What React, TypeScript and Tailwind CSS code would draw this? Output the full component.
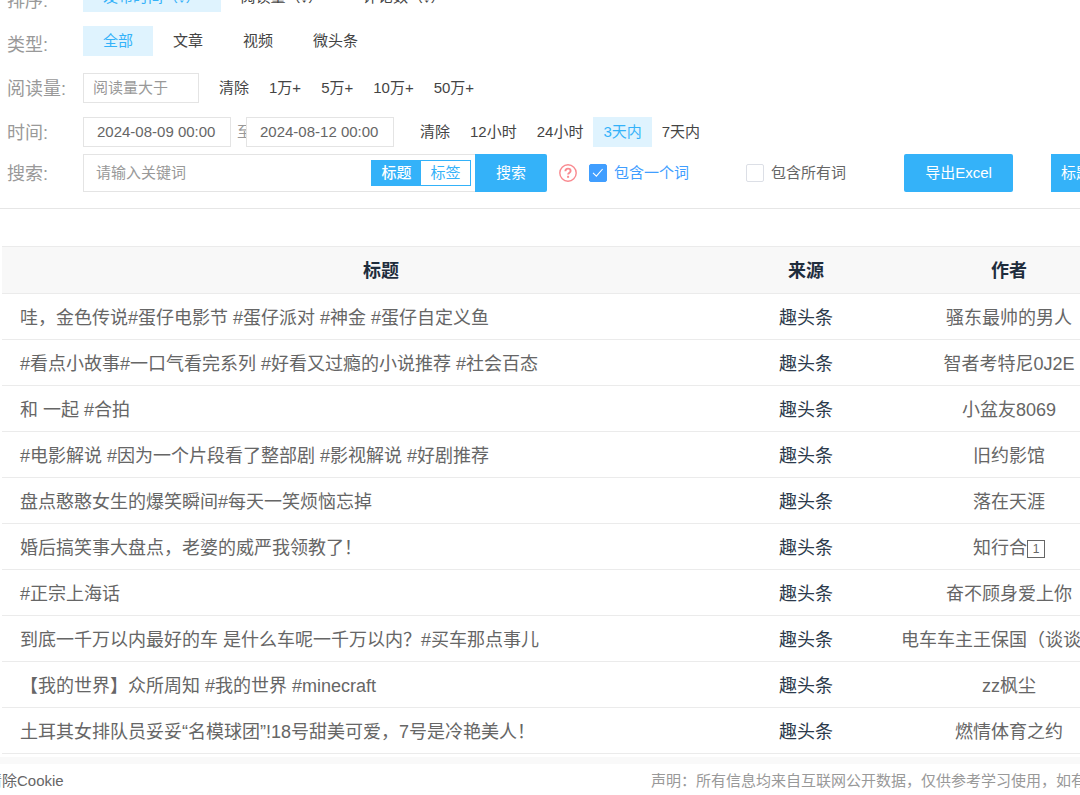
import { useState } from 'react'
import type { ReactNode } from 'react'
import clsx from 'clsx'

const SORTS = ['发布时间（↓）', '阅读量（↓）', '评论数（↓）']
const TYPES = ['全部', '文章', '视频', '微头条']
const READS = ['清除', '1万+', '5万+', '10万+', '50万+']
const TIMES = ['清除', '12小时', '24小时', '3天内', '7天内']

const ROWS: { title: string; author: ReactNode }[] = [
  { title: '哇，金色传说#蛋仔电影节 #蛋仔派对 #神金 #蛋仔自定义鱼', author: '骚东最帅的男人' },
  { title: '#看点小故事#一口气看完系列 #好看又过瘾的小说推荐 #社会百态', author: '智者考特尼0J2E' },
  { title: '和 一起 #合拍', author: '小盆友8069' },
  { title: '#电影解说 #因为一个片段看了整部剧 #影视解说 #好剧推荐', author: '旧约影馆' },
  { title: '盘点憨憨女生的爆笑瞬间#每天一笑烦恼忘掉', author: '落在天涯' },
  { title: '婚后搞笑事大盘点，老婆的威严我领教了！', author: <>知行合<Keycap>1</Keycap></> },
  { title: '#正宗上海话', author: '奋不顾身爱上你' },
  { title: '到底一千万以内最好的车 是什么车呢一千万以内？#买车那点事儿', author: '电车车主王保国（谈谈电）' },
  { title: '【我的世界】众所周知 #我的世界 #minecraft', author: 'zz枫尘' },
  { title: '土耳其女排队员妥妥“名模球团”!18号甜美可爱，7号是冷艳美人！', author: '燃情体育之约' },
]

function Keycap({ children }: { children: ReactNode }) {
  return (
    <span className="inline-flex h-[18px] w-[18px] items-center justify-center border border-[#666] align-middle text-xs leading-none font-medium">
      {children}
    </span>
  )
}

interface FilterRowProps {
  label: string
  className?: string
  labelClassName?: string
  children: ReactNode
}

function FilterRow({ label, className, labelClassName = 'pt-0.5', children }: FilterRowProps) {
  return (
    <div className={clsx('flex items-center', className)}>
      <div className={clsx('w-[76px] shrink-0 text-lg leading-6 text-[#999]', labelClassName)}>{label}</div>
      {children}
    </div>
  )
}

interface OptionsProps {
  items: string[]
  value?: string
  wide?: boolean
  onChange: (v: string) => void
}

function Options({ items, value, wide, onChange }: OptionsProps) {
  return (
    <div className="flex">
      {items.map((item) => (
        <button
          key={item}
          type="button"
          onClick={() => onChange(item)}
          className={clsx(
            'h-[30px] whitespace-nowrap',
            wide ? 'px-5' : 'px-[10px]',
            item === value ? 'bg-[#dff3fe] text-[#34b2f9]' : 'text-[#444]'
          )}
        >
          {item}
        </button>
      ))}
    </div>
  )
}

function Check({ label, checked, onChange }: { label: string; checked: boolean; onChange: (v: boolean) => void }) {
  return (
    <label className={clsx('flex shrink-0 items-center gap-[7px]', checked ? 'text-[#409eff]' : 'text-[#666]')}>
      <span className="relative block size-[18px]">
        <input
          type="checkbox"
          checked={checked}
          onChange={(e) => onChange(e.target.checked)}
          className="block size-[18px] appearance-none rounded-[2px] border border-[#dcdfe6] bg-white checked:border-[#409eff] checked:bg-[#409eff]"
        />
        {checked && (
          <svg viewBox="0 0 18 18" className="pointer-events-none absolute inset-0 size-[18px]" fill="none" stroke="#fff" strokeWidth="1.1">
            <path d="M4 8.8 L7.4 12.2 L13.6 5" />
          </svg>
        )}
      </span>
      {label}
    </label>
  )
}

export default function App() {
  const [sort, setSort] = useState(SORTS[0])
  const [type, setType] = useState('全部')
  const [reads, setReads] = useState('')
  const [time, setTime] = useState('3天内')
  const [start, setStart] = useState('2024-08-09 00:00')
  const [end, setEnd] = useState('2024-08-12 00:00')
  const [field, setField] = useState('标题')
  const [anyWord, setAnyWord] = useState(true)
  const [allWords, setAllWords] = useState(false)

  return (
    <div className="overflow-hidden bg-white font-['Liberation_Sans','Noto_Sans_CJK_SC',sans-serif] text-[15px] leading-5 text-[#444]">
      <section className="-mt-[18px] border-b border-[#e6e6e6] pb-4 pl-[7px]">
        <FilterRow label="排序:" labelClassName="pt-2" className="mb-3.5 h-[30px]">
          <Options wide items={SORTS} value={sort} onChange={setSort} />
        </FilterRow>
        <FilterRow label="类型:" labelClassName="pt-2" className="mb-[17px] h-[30px]">
          <Options wide items={TYPES} value={type} onChange={setType} />
        </FilterRow>
        <FilterRow label="阅读量:" className="mb-3.5 h-[30px]">
          <input
            aria-label="阅读量"
            placeholder="阅读量大于"
            className="mr-[10px] h-[30px] w-[116px] border border-[#e4e4e4] px-[9px] pb-0.5 outline-none placeholder:text-[#999]"
          />
          <Options items={READS} value={reads} onChange={setReads} />
        </FilterRow>
        <FilterRow label="时间:" className="mb-[7px] h-[30px]">
          <input
            aria-label="开始时间"
            value={start}
            onChange={(e) => setStart(e.target.value)}
            className="h-[30px] w-[148px] border border-[#e4e4e4] px-[13px] pb-0.5 text-[#666] outline-none"
          />
          <span className="w-[15px] overflow-hidden pl-[6px] whitespace-nowrap text-[#999]">至</span>
          <input
            aria-label="结束时间"
            value={end}
            onChange={(e) => setEnd(e.target.value)}
            className="mr-4 h-[30px] w-[148px] border border-[#e4e4e4] px-[13px] pb-0.5 text-[#666] outline-none"
          />
          <Options items={TIMES} value={time} onChange={setTime} />
        </FilterRow>
        <FilterRow label="搜索:" className="h-[38px]">
          <div className="flex h-[38px] w-[392px] shrink-0 items-center border border-r-0 border-[#e4e4e4] pr-1">
            <input
              aria-label="关键词"
              placeholder="请输入关键词"
              className="h-full min-w-0 flex-1 px-3 pb-0.5 outline-none placeholder:text-[#999]"
            />
            <div className="flex h-[26px] border border-[#34b2f9]">
              {['标题', '标签'].map((f) => (
                <button
                  key={f}
                  type="button"
                  onClick={() => setField(f)}
                  className={clsx('w-[49px]', f === field ? 'bg-[#34b2f9] font-medium text-white' : 'text-[#34b2f9]')}
                >
                  {f}
                </button>
              ))}
            </div>
          </div>
          <button type="button" className="h-[38px] w-[72px] shrink-0 rounded-r-[2px] bg-[#34b2f9] text-white">搜索</button>
          <svg viewBox="0 0 18 18" className="mr-3 ml-3 size-[18px] shrink-0" fill="none" stroke="#f98a90">
            <circle cx="9" cy="9" r="8.2" strokeWidth="1.4" />
            <path d="M6.4 7.2 C6.4 5.5 7.5 4.6 9 4.6 C10.5 4.6 11.6 5.5 11.6 6.9 C11.6 8.6 9.1 8.7 9.1 10.6" strokeWidth="1.9" />
            <path d="M9.1 11.8 V13.8" strokeWidth="2" />
          </svg>
          <Check label="包含一个词" checked={anyWord} onChange={setAnyWord} />
          <div className="w-[57px] shrink-0" />
          <Check label="包含所有词" checked={allWords} onChange={setAllWords} />
          <button type="button" className="ml-[58px] h-[38px] w-[109px] shrink-0 rounded-[2px] bg-[#34b2f9] text-white">导出Excel</button>
          <button type="button" className="ml-[38px] h-[38px] shrink-0 bg-[#34b2f9] px-[10px] text-white">标题</button>
        </FilterRow>
      </section>

      <div className="mt-[37px] ml-0.5">
        <table className="w-full min-w-[1164px] table-fixed border-separate border-spacing-0 text-lg leading-6">
          <colgroup>
            <col />
            <col className="w-[92px]" />
            <col className="w-[314px]" />
          </colgroup>
          <thead>
            <tr className="bg-[#f8f8f8] text-[#1f2d3d]">
              {['标题', '来源', '作者'].map((h) => (
                <th key={h} className="h-12 border-y border-[#ebebeb] pt-0.5 font-bold">{h}</th>
              ))}
            </tr>
          </thead>
          <tbody>
            {ROWS.map((row) => (
              <tr key={row.title} className="text-[#666]">
                <td className="h-[46px] border-b border-[#ebebeb] pt-0.5 pl-[18px] whitespace-nowrap">{row.title}</td>
                <td className="border-b border-[#ebebeb] pt-0.5 text-center whitespace-nowrap text-[#2c3a4b]">趣头条</td>
                <td className="border-b border-[#ebebeb] pt-0.5 text-center whitespace-nowrap">{row.author}</td>
              </tr>
            ))}
          </tbody>
        </table>
      </div>

      <footer className="mt-[3px] border-t-[7px] border-[#f9f9f9]">
        <div className="-mr-1.5 -ml-[13px] flex h-[34px] items-center justify-between whitespace-nowrap">
          <a href="#" className="text-[#666]">清除Cookie</a>
          <p className="text-[#999]">声明：所有信息均来自互联网公开数据，仅供参考学习使用，如有</p>
        </div>
      </footer>
    </div>
  )
}
